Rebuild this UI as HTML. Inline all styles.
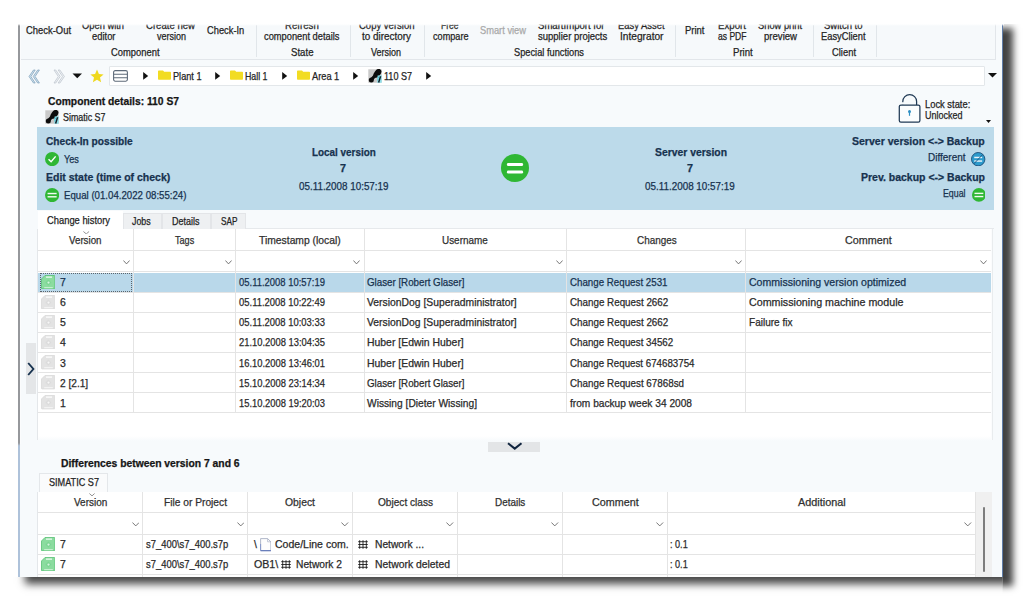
<!DOCTYPE html>
<html lang="en"><head><meta charset="utf-8"><title>Component details: 110 S7</title>
<style>
html,body{margin:0;padding:0;}
body{width:1024px;height:600px;overflow:hidden;background:#fff;position:relative;font-family:"Liberation Sans", sans-serif;}
.b{position:absolute;display:block;}
.t{position:absolute;white-space:pre;line-height:20px;height:20px;transform-origin:0 50%;-webkit-text-stroke:0.25px;}
</style></head><body>
<div class="b" style="left:18px;top:24px;width:984.6px;height:553px;box-shadow:7.5px 6.5px 7px 2.5px rgba(0,0,0,.74);clip-path:polygon(984.6px -20px,1030px -20px,1030px 600px,984.6px 600px);"></div>
<div class="b" style="left:18px;top:24px;width:984.6px;height:553px;box-shadow:9px 4px 8px 2.5px rgba(0,0,0,.72);clip-path:polygon(-20px 553px,984.6px 553px,984.6px 600px,-20px 600px);"></div>
<div class="b" style="left:18px;top:24px;width:984.6px;height:553px;background:#f7fafc;"></div>
<div class="b" style="left:18px;top:24px;width:2px;height:420px;background:#96989c;"></div>
<div class="b" style="left:20px;top:24px;width:1.3px;height:420px;background:#fbfcfd;"></div>
<div class="b" style="left:18px;top:443px;width:2px;height:3px;background:linear-gradient(#96989c,#b4c6dc);"></div>
<div class="b" style="left:18.2px;top:446px;width:1.4px;height:131px;background:#aec2da;"></div>
<div class="b" style="left:1001.8px;top:24px;width:0.8px;height:553px;background:#5f7da8;"></div>
<div class="b" style="left:20.5px;top:24px;width:975.0px;height:35.5px;background:#f6f9fb;border-bottom:1px solid #e2e6ea;border-right:1px solid #e2e6ea;box-sizing:border-box;"></div>
<div class="b" style="left:255.5px;top:25px;width:1.0px;height:32px;background:#e1e6ea;"></div>
<div class="b" style="left:349.75px;top:25px;width:1.0px;height:32px;background:#e1e6ea;"></div>
<div class="b" style="left:424px;top:25px;width:1px;height:32px;background:#e1e6ea;"></div>
<div class="b" style="left:674.5px;top:25px;width:1.0px;height:32px;background:#e1e6ea;"></div>
<div class="b" style="left:813px;top:25px;width:1px;height:32px;background:#e1e6ea;"></div>
<div class="b" style="left:875.5px;top:25px;width:1.0px;height:32px;background:#e1e6ea;"></div>
<div class="b" style="left:109px;top:65.5px;width:876px;height:20.5px;background:#fff;border:1px solid #e3e7ea;box-sizing:border-box;border-radius:1px;"></div>
<svg class="b" style="left:28px;top:69px" width="40" height="15" viewBox="0 0 40 15"><path d="M5.5 1 L7.2 1 L2.9 7.5 L7.2 14 L5.5 14 L1 7.5 Z M9.7 1 L11.4 1 L7.1 7.5 L11.4 14 L9.7 14 L5.2 7.5 Z" fill="#cfe4f1" stroke="#86a5bd" stroke-width="0.8" stroke-linejoin="round"/><path d="M26 1 L27.7 1 L32.2 7.5 L27.7 14 L26 14 L30.3 7.5 Z M30.2 1 L31.9 1 L36.4 7.5 L31.9 14 L30.2 14 L34.5 7.5 Z" fill="#f0f3f6" stroke="#bfc7cf" stroke-width="0.8" stroke-linejoin="round"/></svg>
<svg class="b" style="left:72px;top:72.5px" width="11" height="6" viewBox="0 0 11 6"><path d="M0.5 0.5 L10 0.5 L5.25 5.2 Z" fill="#111"/></svg>
<svg class="b" style="left:90px;top:68.9px" width="14" height="14" viewBox="0 0 14 14"><path d="M7 0.6 L8.9 5 L13.6 5.4 L10 8.5 L11.1 13.2 L7 10.7 L2.9 13.2 L4 8.5 L0.4 5.4 L5.1 5 Z" fill="#efd81d"/></svg>
<svg class="b" style="left:113px;top:70.1px" width="15" height="12" viewBox="0 0 15 12"><rect x="0.6" y="0.6" width="13.8" height="10.6" rx="1.6" fill="#fff" stroke="#5f6b7a" stroke-width="1.1"/><path d="M0.6 4.2 H14.4 M0.6 7.7 H14.4" stroke="#5f6b7a" stroke-width="1.1"/></svg>
<svg class="b" style="left:142.5px;top:71.8px" width="6" height="8" viewBox="0 0 6 8"><path d="M0.2 0.1 L5.2 3.95 L0.2 7.8 Z" fill="#111"/></svg>
<svg class="b" style="left:158px;top:70px" width="13" height="10" viewBox="0 0 13 10"><path d="M0 1.2 Q0 0.4 0.8 0.4 H5 L6.2 1.8 H12.2 Q13 1.8 13 2.6 V9 Q13 9.8 12.2 9.8 H0.8 Q0 9.8 0 9 Z" fill="#f2dc22"/></svg>
<svg class="b" style="left:215px;top:71.8px" width="6" height="8" viewBox="0 0 6 8"><path d="M0.2 0.1 L5.2 3.95 L0.2 7.8 Z" fill="#111"/></svg>
<svg class="b" style="left:230px;top:70px" width="13" height="10" viewBox="0 0 13 10"><path d="M0 1.2 Q0 0.4 0.8 0.4 H5 L6.2 1.8 H12.2 Q13 1.8 13 2.6 V9 Q13 9.8 12.2 9.8 H0.8 Q0 9.8 0 9 Z" fill="#f2dc22"/></svg>
<svg class="b" style="left:281.5px;top:71.8px" width="6" height="8" viewBox="0 0 6 8"><path d="M0.2 0.1 L5.2 3.95 L0.2 7.8 Z" fill="#111"/></svg>
<svg class="b" style="left:296.5px;top:70px" width="13" height="10" viewBox="0 0 13 10"><path d="M0 1.2 Q0 0.4 0.8 0.4 H5 L6.2 1.8 H12.2 Q13 1.8 13 2.6 V9 Q13 9.8 12.2 9.8 H0.8 Q0 9.8 0 9 Z" fill="#f2dc22"/></svg>
<svg class="b" style="left:353px;top:71.8px" width="6" height="8" viewBox="0 0 6 8"><path d="M0.2 0.1 L5.2 3.95 L0.2 7.8 Z" fill="#111"/></svg>
<svg class="b" style="left:367.75px;top:68.75px" width="14" height="14" viewBox="0 0 14 14"><rect x="0.3" y="0.3" width="13.4" height="13.4" fill="#c9c9c9"/><ellipse cx="9.4" cy="4.3" rx="4.9" ry="3.1" transform="rotate(-52 9.4 4.3)" fill="#0c0c0c"/><path d="M3.4 10.8 L8.6 4.8" stroke="#0c0c0c" stroke-width="3.2" stroke-linecap="round"/><circle cx="3.3" cy="10.9" r="2.5" fill="#0c0c0c"/><path d="M9.6 6.6 L13.7 6.2 L13.7 13.7 L9.2 13.7 Z" fill="#8fe0ea"/><path d="M12.6 7.2 L10.6 13.4" stroke="#13202a" stroke-width="1.5"/><path d="M10.4 7.8 L9.9 11.6" stroke="#27b4c9" stroke-width="1.1" stroke-dasharray="1 0.8"/></svg>
<svg class="b" style="left:426px;top:71.8px" width="6" height="8" viewBox="0 0 6 8"><path d="M0.2 0.1 L5.2 3.95 L0.2 7.8 Z" fill="#111"/></svg>
<svg class="b" style="left:988px;top:73px" width="9" height="5" viewBox="0 0 9 5"><path d="M0 0 H9 L4.5 4.6 Z" fill="#111"/></svg>
<svg class="b" style="left:45.2px;top:109.8px" width="14" height="14" viewBox="0 0 14 14"><rect x="0.3" y="0.3" width="13.4" height="13.4" fill="#c9c9c9"/><ellipse cx="9.4" cy="4.3" rx="4.9" ry="3.1" transform="rotate(-52 9.4 4.3)" fill="#0c0c0c"/><path d="M3.4 10.8 L8.6 4.8" stroke="#0c0c0c" stroke-width="3.2" stroke-linecap="round"/><circle cx="3.3" cy="10.9" r="2.5" fill="#0c0c0c"/><path d="M9.6 6.6 L13.7 6.2 L13.7 13.7 L9.2 13.7 Z" fill="#8fe0ea"/><path d="M12.6 7.2 L10.6 13.4" stroke="#13202a" stroke-width="1.5"/><path d="M10.4 7.8 L9.9 11.6" stroke="#27b4c9" stroke-width="1.1" stroke-dasharray="1 0.8"/></svg>
<svg class="b" style="left:897px;top:92px" width="25" height="32" viewBox="0 0 25 32"><path d="M5.8 13 V9.5 A6.9 6.9 0 0 1 19.6 9.5 V13" fill="none" stroke="#213a55" stroke-width="1.25"/><rect x="0" y="10.2" width="7" height="2.6" fill="#f7fafc"/><rect x="2.3" y="13" width="20.6" height="17" rx="1.6" fill="#fbfdfe" stroke="#213a55" stroke-width="1.25"/><circle cx="12.5" cy="19.4" r="1.5" fill="#2f8fc4"/><rect x="11.9" y="19.6" width="1.2" height="4.2" fill="#2f8fc4"/></svg>
<svg class="b" style="left:985.5px;top:119.5px" width="5" height="3" viewBox="0 0 5 3"><path d="M0 0 H5 L2.5 3 Z" fill="#111"/></svg>
<div class="b" style="left:37px;top:127px;width:957.25px;height:83px;background:#bcdaea;"></div>
<svg class="b" style="left:45.3px;top:152.0px" width="14.2" height="14.2" viewBox="0 0 14.2 14.2"><circle cx="7.1" cy="7.1" r="7.1" fill="#2fb734"/><path d="M3.55 7.24 L6.11 9.80 L10.65 4.40" fill="none" stroke="#fff" stroke-width="1.42"/></svg>
<svg class="b" style="left:45.3px;top:187.5px" width="14.2" height="14.2" viewBox="0 0 14.2 14.2"><circle cx="7.1" cy="7.1" r="7.1" fill="#2fb734"/><rect x="2.56" y="4.83" width="9.09" height="1.42" fill="#f2fbf2"/><rect x="2.56" y="8.09" width="9.09" height="1.42" fill="#f2fbf2"/></svg>
<svg class="b" style="left:501.4px;top:154.3px" width="28" height="28" viewBox="0 0 28 28"><circle cx="14" cy="14" r="14" fill="#2fb734"/><rect x="5.88" y="8.96" width="16.24" height="3.08" rx="1.40" fill="#fff"/><rect x="5.88" y="16.52" width="16.24" height="3.08" rx="1.40" fill="#fff"/></svg>
<svg class="b" style="left:971.4px;top:151.70000000000002px" width="14.4" height="14.4" viewBox="0 0 14.4 14.4"><circle cx="7.2" cy="7.2" r="6.7" fill="#2d9bcc" stroke="#1d4e78" stroke-width="0.9"/><rect x="3.24" y="4.75" width="7.92" height="1.44" fill="#e9f4fa"/><rect x="3.24" y="8.35" width="7.92" height="1.44" fill="#e9f4fa"/><path d="M11.66 2.59 L2.88 11.81" stroke="#1d4e78" stroke-width="0.9"/></svg>
<svg class="b" style="left:971.7px;top:188.0px" width="13.8" height="13.8" viewBox="0 0 13.8 13.8"><circle cx="6.9" cy="6.9" r="6.9" fill="#2fb734"/><rect x="2.48" y="4.69" width="8.83" height="1.38" fill="#f2fbf2"/><rect x="2.48" y="7.87" width="8.83" height="1.38" fill="#f2fbf2"/></svg>
<div class="b" style="left:37.5px;top:211.3px;width:85.0px;height:18.2px;background:#fff;"></div>
<div class="b" style="left:123px;top:213px;width:38.5px;height:15.5px;background:#eef0f2;border:1px solid #e3e5e8;border-bottom:none;box-sizing:border-box;"></div>
<div class="b" style="left:162px;top:213px;width:48.5px;height:15.5px;background:#eef0f2;border:1px solid #e3e5e8;border-bottom:none;box-sizing:border-box;"></div>
<div class="b" style="left:211px;top:213px;width:35px;height:15.5px;background:#eef0f2;border:1px solid #e3e5e8;border-bottom:none;box-sizing:border-box;"></div>
<div class="b" style="left:246px;top:228px;width:748px;height:1px;background:#e6e9ec;"></div>
<div class="b" style="left:37.5px;top:229px;width:953.0px;height:207px;background:#fff;"></div>
<div class="b" style="left:37.5px;top:436px;width:953.0px;height:5px;background:linear-gradient(#fff,#f7fafc);"></div>
<div class="b" style="left:990.5px;top:229px;width:2.0px;height:211px;background:#fbfcfd;"></div>
<div class="b" style="left:992px;top:228.5px;width:1px;height:211.5px;background:#e9ecee;"></div>
<div class="b" style="left:37.5px;top:272.5px;width:953.0px;height:19.5px;background:#b9d8ea;"></div>
<div class="b" style="left:37.5px;top:249.5px;width:953.0px;height:1.0px;background:#e4e4e4;"></div>
<div class="b" style="left:37.5px;top:271.4px;width:953.0px;height:1.0px;background:#e4e4e4;"></div>
<div class="b" style="left:37.5px;top:291.5px;width:953.0px;height:1.0px;background:#e4e4e4;"></div>
<div class="b" style="left:37.5px;top:311.5px;width:953.0px;height:1.0px;background:#e4e4e4;"></div>
<div class="b" style="left:37.5px;top:331.9px;width:953.0px;height:1.0px;background:#e4e4e4;"></div>
<div class="b" style="left:37.5px;top:352.0px;width:953.0px;height:1.0px;background:#e4e4e4;"></div>
<div class="b" style="left:37.5px;top:372.0px;width:953.0px;height:1.0px;background:#e4e4e4;"></div>
<div class="b" style="left:37.5px;top:392.0px;width:953.0px;height:1.0px;background:#e4e4e4;"></div>
<div class="b" style="left:37.5px;top:412.2px;width:953.0px;height:1.0px;background:#e4e4e4;"></div>
<div class="b" style="left:132.75px;top:229px;width:1.0px;height:183.7px;background:#e4e4e4;"></div>
<div class="b" style="left:234.5px;top:229px;width:1.0px;height:183.7px;background:#e4e4e4;"></div>
<div class="b" style="left:363.5px;top:229px;width:1.0px;height:183.7px;background:#e4e4e4;"></div>
<div class="b" style="left:565.75px;top:229px;width:1.0px;height:183.7px;background:#e4e4e4;"></div>
<div class="b" style="left:745.25px;top:229px;width:1.0px;height:183.7px;background:#e4e4e4;"></div>
<div class="b" style="left:37.0px;top:229px;width:1.0px;height:211px;background:#e4e7ea;"></div>
<div class="b" style="left:40px;top:272.5px;width:91.8px;height:19.0px;border:1px dotted #5d646b;box-sizing:border-box;"></div>
<svg class="b" style="left:83px;top:230.6px" width="6.5" height="3.5" viewBox="0 0 6.5 3.5"><path d="M0.4 0.5 L3.25 2.9 L6.1 0.5" fill="none" stroke="#777" stroke-width="0.8"/></svg>
<svg class="b" style="left:122.5px;top:260px" width="7" height="4.5" viewBox="0 0 7 4.5"><path d="M0.4 0.5 L3.5 3.9 L6.6 0.5" fill="none" stroke="#666" stroke-width="0.9"/></svg>
<svg class="b" style="left:224.5px;top:260px" width="7" height="4.5" viewBox="0 0 7 4.5"><path d="M0.4 0.5 L3.5 3.9 L6.6 0.5" fill="none" stroke="#666" stroke-width="0.9"/></svg>
<svg class="b" style="left:353px;top:260px" width="7" height="4.5" viewBox="0 0 7 4.5"><path d="M0.4 0.5 L3.5 3.9 L6.6 0.5" fill="none" stroke="#666" stroke-width="0.9"/></svg>
<svg class="b" style="left:555.75px;top:260px" width="7" height="4.5" viewBox="0 0 7 4.5"><path d="M0.4 0.5 L3.5 3.9 L6.6 0.5" fill="none" stroke="#666" stroke-width="0.9"/></svg>
<svg class="b" style="left:734.5px;top:260px" width="7" height="4.5" viewBox="0 0 7 4.5"><path d="M0.4 0.5 L3.5 3.9 L6.6 0.5" fill="none" stroke="#666" stroke-width="0.9"/></svg>
<svg class="b" style="left:979.5px;top:260px" width="7" height="4.5" viewBox="0 0 7 4.5"><path d="M0.4 0.5 L3.5 3.9 L6.6 0.5" fill="none" stroke="#666" stroke-width="0.9"/></svg>
<svg class="b" style="left:40.8px;top:274.8px" width="14.4" height="14.4" viewBox="0 0 14.4 14.4"><path d="M0.5 4 L4 0.5 H13.3 Q13.9 0.5 13.9 1.1 V13.3 Q13.9 13.9 13.3 13.9 H1.1 Q0.5 13.9 0.5 13.3 Z" fill="#8bdc9f" stroke="#56bf72" stroke-width="0.8"/><rect x="5" y="1.3" width="6" height="1.7" fill="#d4f3dc"/><path d="M7.4 4.6 L10.4 7.6 L7.4 10.6 L4.4 7.6 Z" fill="#6fcf88" opacity="0.55"/><circle cx="7.5" cy="7.6" r="1.1" fill="#d4f3dc"/><rect x="3.2" y="12.2" width="8.6" height="1" fill="#d4f3dc"/></svg>
<svg class="b" style="left:40.8px;top:294.88px" width="14.4" height="14.4" viewBox="0 0 14.4 14.4"><path d="M0.5 4 L4 0.5 H13.3 Q13.9 0.5 13.9 1.1 V13.3 Q13.9 13.9 13.3 13.9 H1.1 Q0.5 13.9 0.5 13.3 Z" fill="#e3e3e3" stroke="#d9d9d9" stroke-width="0.8"/><rect x="5" y="1.3" width="6" height="1.7" fill="#f6f6f6"/><path d="M7.4 4.6 L10.4 7.6 L7.4 10.6 L4.4 7.6 Z" fill="#d6d6d6" opacity="0.55"/><circle cx="7.5" cy="7.6" r="1.1" fill="#f6f6f6"/><rect x="3.2" y="12.2" width="8.6" height="1" fill="#f6f6f6"/></svg>
<svg class="b" style="left:40.8px;top:314.96000000000004px" width="14.4" height="14.4" viewBox="0 0 14.4 14.4"><path d="M0.5 4 L4 0.5 H13.3 Q13.9 0.5 13.9 1.1 V13.3 Q13.9 13.9 13.3 13.9 H1.1 Q0.5 13.9 0.5 13.3 Z" fill="#e3e3e3" stroke="#d9d9d9" stroke-width="0.8"/><rect x="5" y="1.3" width="6" height="1.7" fill="#f6f6f6"/><path d="M7.4 4.6 L10.4 7.6 L7.4 10.6 L4.4 7.6 Z" fill="#d6d6d6" opacity="0.55"/><circle cx="7.5" cy="7.6" r="1.1" fill="#f6f6f6"/><rect x="3.2" y="12.2" width="8.6" height="1" fill="#f6f6f6"/></svg>
<svg class="b" style="left:40.8px;top:335.04px" width="14.4" height="14.4" viewBox="0 0 14.4 14.4"><path d="M0.5 4 L4 0.5 H13.3 Q13.9 0.5 13.9 1.1 V13.3 Q13.9 13.9 13.3 13.9 H1.1 Q0.5 13.9 0.5 13.3 Z" fill="#e3e3e3" stroke="#d9d9d9" stroke-width="0.8"/><rect x="5" y="1.3" width="6" height="1.7" fill="#f6f6f6"/><path d="M7.4 4.6 L10.4 7.6 L7.4 10.6 L4.4 7.6 Z" fill="#d6d6d6" opacity="0.55"/><circle cx="7.5" cy="7.6" r="1.1" fill="#f6f6f6"/><rect x="3.2" y="12.2" width="8.6" height="1" fill="#f6f6f6"/></svg>
<svg class="b" style="left:40.8px;top:355.12px" width="14.4" height="14.4" viewBox="0 0 14.4 14.4"><path d="M0.5 4 L4 0.5 H13.3 Q13.9 0.5 13.9 1.1 V13.3 Q13.9 13.9 13.3 13.9 H1.1 Q0.5 13.9 0.5 13.3 Z" fill="#e3e3e3" stroke="#d9d9d9" stroke-width="0.8"/><rect x="5" y="1.3" width="6" height="1.7" fill="#f6f6f6"/><path d="M7.4 4.6 L10.4 7.6 L7.4 10.6 L4.4 7.6 Z" fill="#d6d6d6" opacity="0.55"/><circle cx="7.5" cy="7.6" r="1.1" fill="#f6f6f6"/><rect x="3.2" y="12.2" width="8.6" height="1" fill="#f6f6f6"/></svg>
<svg class="b" style="left:40.8px;top:375.2px" width="14.4" height="14.4" viewBox="0 0 14.4 14.4"><path d="M0.5 4 L4 0.5 H13.3 Q13.9 0.5 13.9 1.1 V13.3 Q13.9 13.9 13.3 13.9 H1.1 Q0.5 13.9 0.5 13.3 Z" fill="#e3e3e3" stroke="#d9d9d9" stroke-width="0.8"/><rect x="5" y="1.3" width="6" height="1.7" fill="#f6f6f6"/><path d="M7.4 4.6 L10.4 7.6 L7.4 10.6 L4.4 7.6 Z" fill="#d6d6d6" opacity="0.55"/><circle cx="7.5" cy="7.6" r="1.1" fill="#f6f6f6"/><rect x="3.2" y="12.2" width="8.6" height="1" fill="#f6f6f6"/></svg>
<svg class="b" style="left:40.8px;top:395.28px" width="14.4" height="14.4" viewBox="0 0 14.4 14.4"><path d="M0.5 4 L4 0.5 H13.3 Q13.9 0.5 13.9 1.1 V13.3 Q13.9 13.9 13.3 13.9 H1.1 Q0.5 13.9 0.5 13.3 Z" fill="#e3e3e3" stroke="#d9d9d9" stroke-width="0.8"/><rect x="5" y="1.3" width="6" height="1.7" fill="#f6f6f6"/><path d="M7.4 4.6 L10.4 7.6 L7.4 10.6 L4.4 7.6 Z" fill="#d6d6d6" opacity="0.55"/><circle cx="7.5" cy="7.6" r="1.1" fill="#f6f6f6"/><rect x="3.2" y="12.2" width="8.6" height="1" fill="#f6f6f6"/></svg>
<div class="b" style="left:25.75px;top:342.5px;width:10.0px;height:51.25px;background:#e4e6e8;"></div>
<svg class="b" style="left:26.5px;top:362px" width="8" height="14" viewBox="0 0 8 14"><path d="M1.2 1 L6.4 7 L1.2 13" fill="none" stroke="#17324f" stroke-width="1.9"/></svg>
<div class="b" style="left:488.3px;top:441.7px;width:52.0px;height:10.0px;background:#e3e5e7;"></div>
<svg class="b" style="left:507px;top:441.8px" width="15.5" height="8.5" viewBox="0 0 15.5 8.5"><path d="M1 1.2 L7.75 6.6 L14.5 1.2" fill="none" stroke="#10253f" stroke-width="2"/></svg>
<div class="b" style="left:39.3px;top:473.3px;width:69.0px;height:18.4px;background:#fafbfc;border:1px solid #e4e7ea;border-bottom:none;box-sizing:border-box;"></div>
<div class="b" style="left:37.5px;top:491.7px;width:937.8px;height:85.3px;background:#fff;"></div>
<div class="b" style="left:37.5px;top:511.79999999999995px;width:937.8px;height:1.0px;background:#e4e4e4;"></div>
<div class="b" style="left:37.5px;top:533.5px;width:937.8px;height:1.0px;background:#e4e4e4;"></div>
<div class="b" style="left:37.5px;top:553.8px;width:937.8px;height:1.0px;background:#e4e4e4;"></div>
<div class="b" style="left:37.5px;top:573.8px;width:937.8px;height:1.0px;background:#e4e4e4;"></div>
<div class="b" style="left:142.2px;top:491.7px;width:1.0px;height:85.3px;background:#e4e4e4;"></div>
<div class="b" style="left:246.8px;top:491.7px;width:1.0px;height:85.3px;background:#e4e4e4;"></div>
<div class="b" style="left:352.2px;top:491.7px;width:1.0px;height:85.3px;background:#e4e4e4;"></div>
<div class="b" style="left:457.2px;top:491.7px;width:1.0px;height:85.3px;background:#e4e4e4;"></div>
<div class="b" style="left:562.2px;top:491.7px;width:1.0px;height:85.3px;background:#e4e4e4;"></div>
<div class="b" style="left:666.5px;top:491.7px;width:1.0px;height:85.3px;background:#e4e4e4;"></div>
<div class="b" style="left:37.0px;top:491.7px;width:1.0px;height:85.3px;background:#e4e7ea;"></div>
<div class="b" style="left:974.8px;top:491.7px;width:1.0px;height:85.3px;background:#e4e4e4;"></div>
<svg class="b" style="left:88.5px;top:492.5px" width="6" height="3.5" viewBox="0 0 6 3.5"><path d="M0.4 0.5 L3.0 2.9 L5.6 0.5" fill="none" stroke="#777" stroke-width="0.8"/></svg>
<svg class="b" style="left:131.7px;top:521.7px" width="7.5" height="4.5" viewBox="0 0 7.5 4.5"><path d="M0.4 0.5 L3.75 3.9 L7.1 0.5" fill="none" stroke="#666" stroke-width="0.9"/></svg>
<svg class="b" style="left:236.7px;top:521.7px" width="7.5" height="4.5" viewBox="0 0 7.5 4.5"><path d="M0.4 0.5 L3.75 3.9 L7.1 0.5" fill="none" stroke="#666" stroke-width="0.9"/></svg>
<svg class="b" style="left:341.3px;top:521.7px" width="7.5" height="4.5" viewBox="0 0 7.5 4.5"><path d="M0.4 0.5 L3.75 3.9 L7.1 0.5" fill="none" stroke="#666" stroke-width="0.9"/></svg>
<svg class="b" style="left:446.3px;top:521.7px" width="7.5" height="4.5" viewBox="0 0 7.5 4.5"><path d="M0.4 0.5 L3.75 3.9 L7.1 0.5" fill="none" stroke="#666" stroke-width="0.9"/></svg>
<svg class="b" style="left:551.3px;top:521.7px" width="7.5" height="4.5" viewBox="0 0 7.5 4.5"><path d="M0.4 0.5 L3.75 3.9 L7.1 0.5" fill="none" stroke="#666" stroke-width="0.9"/></svg>
<svg class="b" style="left:656px;top:521.7px" width="7.5" height="4.5" viewBox="0 0 7.5 4.5"><path d="M0.4 0.5 L3.75 3.9 L7.1 0.5" fill="none" stroke="#666" stroke-width="0.9"/></svg>
<svg class="b" style="left:964px;top:521.7px" width="7.5" height="4.5" viewBox="0 0 7.5 4.5"><path d="M0.4 0.5 L3.75 3.9 L7.1 0.5" fill="none" stroke="#666" stroke-width="0.9"/></svg>
<div class="b" style="left:976.3px;top:491.7px;width:15.7px;height:85.3px;background:#f0f0f0;"></div>
<div class="b" style="left:983.2px;top:506.7px;width:2.0px;height:65.7px;background:#7d7d7d;border-radius:1px;"></div>
<svg class="b" style="left:40.8px;top:536.8px" width="14.4" height="14.4" viewBox="0 0 14.4 14.4"><path d="M0.5 4 L4 0.5 H13.3 Q13.9 0.5 13.9 1.1 V13.3 Q13.9 13.9 13.3 13.9 H1.1 Q0.5 13.9 0.5 13.3 Z" fill="#8bdc9f" stroke="#56bf72" stroke-width="0.8"/><rect x="5" y="1.3" width="6" height="1.7" fill="#d4f3dc"/><path d="M7.4 4.6 L10.4 7.6 L7.4 10.6 L4.4 7.6 Z" fill="#6fcf88" opacity="0.55"/><circle cx="7.5" cy="7.6" r="1.1" fill="#d4f3dc"/><rect x="3.2" y="12.2" width="8.6" height="1" fill="#d4f3dc"/></svg>
<svg class="b" style="left:40.8px;top:556.8px" width="14.4" height="14.4" viewBox="0 0 14.4 14.4"><path d="M0.5 4 L4 0.5 H13.3 Q13.9 0.5 13.9 1.1 V13.3 Q13.9 13.9 13.3 13.9 H1.1 Q0.5 13.9 0.5 13.3 Z" fill="#8bdc9f" stroke="#56bf72" stroke-width="0.8"/><rect x="5" y="1.3" width="6" height="1.7" fill="#d4f3dc"/><path d="M7.4 4.6 L10.4 7.6 L7.4 10.6 L4.4 7.6 Z" fill="#6fcf88" opacity="0.55"/><circle cx="7.5" cy="7.6" r="1.1" fill="#d4f3dc"/><rect x="3.2" y="12.2" width="8.6" height="1" fill="#d4f3dc"/></svg>
<svg class="b" style="left:259.5px;top:538px" width="11.5" height="13.5" viewBox="0 0 11.5 13.5"><path d="M0.6 0.6 H7.6 L10.9 3.8 V12.6 H0.6 Z" fill="#fdfdfd" stroke="#a9b0c4" stroke-width="0.9"/><path d="M7.6 0.6 V3.8 H10.9" fill="none" stroke="#a9b0c4" stroke-width="0.7"/><path d="M0.6 12.7 H10.9" stroke="#5d74b8" stroke-width="1.1"/><path d="M0.6 6 V12.6" stroke="#7f93cc" stroke-width="0.9"/></svg>
<svg class="b" style="left:357.6px;top:540.4px" width="10" height="9" viewBox="0 0 10 9"><path d="M1.7 0.2 V8.8 M5 0.2 V8.8 M8.3 0.2 V8.8 M0.2 1.7 H9.8 M0.2 4.5 H9.8 M0.2 7.3 H9.8" stroke="#161616" stroke-width="0.86"/></svg>
<svg class="b" style="left:281px;top:560.4px" width="10" height="9" viewBox="0 0 10 9"><path d="M1.7 0.2 V8.8 M5 0.2 V8.8 M8.3 0.2 V8.8 M0.2 1.7 H9.8 M0.2 4.5 H9.8 M0.2 7.3 H9.8" stroke="#161616" stroke-width="0.86"/></svg>
<svg class="b" style="left:357.6px;top:560.4px" width="10" height="9" viewBox="0 0 10 9"><path d="M1.7 0.2 V8.8 M5 0.2 V8.8 M8.3 0.2 V8.8 M0.2 1.7 H9.8 M0.2 4.5 H9.8 M0.2 7.3 H9.8" stroke="#161616" stroke-width="0.86"/></svg>
<span class="t" style="left:25.75px;top:21.00px;font-size:10.3px;color:#242424;transform:scaleX(0.9143);">Check-Out</span>
<span class="t" style="left:82.00px;top:16.00px;font-size:10.3px;color:#242424;transform:scaleX(0.9057);">Open with</span>
<span class="t" style="left:91.50px;top:27.00px;font-size:10.3px;color:#242424;transform:scaleX(0.9121);">editor</span>
<span class="t" style="left:146.00px;top:16.00px;font-size:10.3px;color:#242424;transform:scaleX(0.9306);">Create new</span>
<span class="t" style="left:157.00px;top:27.00px;font-size:10.3px;color:#242424;transform:scaleX(0.8734);">version</span>
<span class="t" style="left:206.50px;top:21.00px;font-size:10.3px;color:#242424;transform:scaleX(0.9041);">Check-In</span>
<span class="t" style="left:111.00px;top:43.00px;font-size:10.3px;color:#242424;transform:scaleX(0.9111);">Component</span>
<span class="t" style="left:284.75px;top:16.00px;font-size:10.3px;color:#242424;transform:scaleX(0.9359);">Refresh</span>
<span class="t" style="left:263.50px;top:27.00px;font-size:10.3px;color:#242424;transform:scaleX(0.9033);">component details</span>
<span class="t" style="left:290.50px;top:43.00px;font-size:10.3px;color:#242424;transform:scaleX(0.9357);">State</span>
<span class="t" style="left:358.50px;top:16.00px;font-size:10.3px;color:#242424;transform:scaleX(0.9236);">Copy version</span>
<span class="t" style="left:362.00px;top:27.00px;font-size:10.3px;color:#242424;transform:scaleX(0.9620);">to directory</span>
<span class="t" style="left:371.00px;top:43.00px;font-size:10.3px;color:#242424;transform:scaleX(0.8731);">Version</span>
<span class="t" style="left:441.00px;top:16.00px;font-size:10.3px;color:#242424;transform:scaleX(0.8260);">Free</span>
<span class="t" style="left:433.00px;top:27.00px;font-size:10.3px;color:#242424;transform:scaleX(0.8861);">compare</span>
<span class="t" style="left:538.00px;top:16.00px;font-size:10.3px;color:#242424;transform:scaleX(0.9297);">SmartImport for</span>
<span class="t" style="left:537.75px;top:27.00px;font-size:10.3px;color:#242424;transform:scaleX(0.9235);">supplier projects</span>
<span class="t" style="left:618.00px;top:16.00px;font-size:10.3px;color:#242424;transform:scaleX(0.9129);">Easy Asset</span>
<span class="t" style="left:619.50px;top:27.00px;font-size:10.3px;color:#242424;transform:scaleX(0.9869);">Integrator</span>
<span class="t" style="left:514.00px;top:43.00px;font-size:10.3px;color:#242424;transform:scaleX(0.8991);">Special functions</span>
<span class="t" style="left:685.00px;top:21.00px;font-size:10.3px;color:#242424;transform:scaleX(0.9204);">Print</span>
<span class="t" style="left:718.00px;top:16.00px;font-size:10.3px;color:#242424;transform:scaleX(0.9407);">Export</span>
<span class="t" style="left:717.50px;top:27.00px;font-size:10.3px;color:#242424;transform:scaleX(0.8298);">as PDF</span>
<span class="t" style="left:733.00px;top:43.00px;font-size:10.3px;color:#242424;transform:scaleX(0.9322);">Print</span>
<span class="t" style="left:758.00px;top:16.00px;font-size:10.3px;color:#242424;transform:scaleX(0.9043);">Show print</span>
<span class="t" style="left:764.00px;top:27.00px;font-size:10.3px;color:#242424;transform:scaleX(0.9300);">preview</span>
<span class="t" style="left:824.00px;top:16.00px;font-size:10.3px;color:#242424;transform:scaleX(0.9215);">Switch to</span>
<span class="t" style="left:821.00px;top:27.00px;font-size:10.3px;color:#242424;transform:scaleX(0.9041);">EasyClient</span>
<span class="t" style="left:832.00px;top:43.00px;font-size:10.3px;color:#242424;transform:scaleX(0.9116);">Client</span>
<span class="t" style="left:480.00px;top:21.00px;font-size:10.3px;color:#a9a9a9;transform:scaleX(0.9033);">Smart view</span>
<span class="t" style="left:172.50px;top:67.00px;font-size:10.3px;color:#242424;transform:scaleX(0.8889);">Plant 1</span>
<span class="t" style="left:244.50px;top:67.00px;font-size:10.3px;color:#242424;transform:scaleX(0.8546);">Hall 1</span>
<span class="t" style="left:311.75px;top:67.00px;font-size:10.3px;color:#242424;transform:scaleX(0.8980);">Area 1</span>
<span class="t" style="left:384.00px;top:67.00px;font-size:10.3px;color:#242424;transform:scaleX(0.8784);">110 S7</span>
<span class="t" style="left:48.00px;top:92.00px;font-size:10.2px;font-weight:700;color:#151515;transform:scaleX(1.0104);">Component details: 110 S7</span>
<span class="t" style="left:63.00px;top:108.00px;font-size:10.3px;color:#242424;transform:scaleX(0.8635);">Simatic S7</span>
<span class="t" style="left:924.75px;top:95.00px;font-size:10.3px;color:#242424;transform:scaleX(0.9087);">Lock state:</span>
<span class="t" style="left:924.75px;top:106.00px;font-size:10.3px;color:#242424;transform:scaleX(0.8734);">Unlocked</span>
<span class="t" style="left:45.75px;top:132.00px;font-size:10.2px;font-weight:700;color:#17324f;transform:scaleX(0.9950);">Check-In possible</span>
<span class="t" style="left:63.80px;top:150.00px;font-size:10.3px;color:#17324f;transform:scaleX(0.8892);">Yes</span>
<span class="t" style="left:45.75px;top:168.00px;font-size:10.2px;font-weight:700;color:#17324f;transform:scaleX(1.0303);">Edit state (time of check)</span>
<span class="t" style="left:63.80px;top:186.00px;font-size:10.3px;color:#17324f;transform:scaleX(0.9381);">Equal (01.04.2022 08:55:24)</span>
<span class="t" style="left:312.25px;top:143.00px;font-size:10.2px;font-weight:700;color:#17324f;transform:scaleX(0.9705);">Local version</span>
<span class="t" style="left:340.40px;top:159.00px;font-size:10.2px;font-weight:700;color:#17324f;transform:scaleX(1.0579);">7</span>
<span class="t" style="left:298.50px;top:177.00px;font-size:10.3px;color:#17324f;transform:scaleX(0.9550);">05.11.2008 10:57:19</span>
<span class="t" style="left:654.50px;top:143.00px;font-size:10.2px;font-weight:700;color:#17324f;transform:scaleX(1.0170);">Server version</span>
<span class="t" style="left:687.20px;top:159.00px;font-size:10.2px;font-weight:700;color:#17324f;transform:scaleX(1.0579);">7</span>
<span class="t" style="left:645.25px;top:177.00px;font-size:10.3px;color:#17324f;transform:scaleX(0.9577);">05.11.2008 10:57:19</span>
<span class="t" style="left:852.25px;top:132.00px;font-size:10.2px;font-weight:700;color:#17324f;transform:scaleX(1.0327);">Server version &lt;-&gt; Backup</span>
<span class="t" style="left:928.00px;top:148.00px;font-size:10.3px;color:#17324f;transform:scaleX(0.9681);">Different</span>
<span class="t" style="left:861.00px;top:168.00px;font-size:10.2px;font-weight:700;color:#17324f;transform:scaleX(1.0297);">Prev. backup &lt;-&gt; Backup</span>
<span class="t" style="left:943.00px;top:184.00px;font-size:10.3px;color:#17324f;transform:scaleX(0.8541);">Equal</span>
<span class="t" style="left:47.00px;top:211.00px;font-size:10.3px;color:#242424;transform:scaleX(0.9095);">Change history</span>
<span class="t" style="left:131.75px;top:212.00px;font-size:10.3px;color:#242424;transform:scaleX(0.8615);">Jobs</span>
<span class="t" style="left:171.75px;top:212.00px;font-size:10.3px;color:#242424;transform:scaleX(0.8734);">Details</span>
<span class="t" style="left:220.50px;top:212.00px;font-size:10.3px;color:#242424;transform:scaleX(0.8006);">SAP</span>
<span class="t" style="left:69.25px;top:230.00px;font-size:10.5px;color:#303030;transform:scaleX(0.9277);">Version</span>
<span class="t" style="left:175.00px;top:230.00px;font-size:10.5px;color:#303030;transform:scaleX(0.8676);">Tags</span>
<span class="t" style="left:259.25px;top:230.00px;font-size:10.5px;color:#303030;transform:scaleX(0.9844);">Timestamp (local)</span>
<span class="t" style="left:442.25px;top:230.00px;font-size:10.5px;color:#303030;transform:scaleX(0.9445);">Username</span>
<span class="t" style="left:636.50px;top:230.00px;font-size:10.5px;color:#303030;transform:scaleX(0.9457);">Changes</span>
<span class="t" style="left:845.00px;top:230.00px;font-size:10.5px;color:#303030;transform:scaleX(1.0271);">Comment</span>
<span class="t" style="left:60.20px;top:272.00px;font-size:10.5px;color:#17324f;transform:scaleX(0.9994);">7</span>
<span class="t" style="left:238.75px;top:272.00px;font-size:10.5px;color:#17324f;transform:scaleX(0.8999);">05.11.2008 10:57:19</span>
<span class="t" style="left:367.25px;top:272.00px;font-size:10.5px;color:#17324f;transform:scaleX(0.9282);">Glaser [Robert Glaser]</span>
<span class="t" style="left:570.00px;top:272.00px;font-size:10.5px;color:#17324f;transform:scaleX(0.9277);">Change Request 2531</span>
<span class="t" style="left:749.00px;top:272.00px;font-size:10.5px;color:#17324f;transform:scaleX(1.0054);">Commissioning version optimized</span>
<span class="t" style="left:60.20px;top:292.00px;font-size:10.5px;color:#2a2a2a;transform:scaleX(0.9994);">6</span>
<span class="t" style="left:238.75px;top:292.00px;font-size:10.5px;color:#2a2a2a;transform:scaleX(0.8999);">05.11.2008 10:22:49</span>
<span class="t" style="left:367.25px;top:292.00px;font-size:10.5px;color:#2a2a2a;transform:scaleX(0.9868);">VersionDog [Superadministrator]</span>
<span class="t" style="left:570.00px;top:292.00px;font-size:10.5px;color:#2a2a2a;transform:scaleX(0.9349);">Change Request 2662</span>
<span class="t" style="left:749.00px;top:292.00px;font-size:10.5px;color:#2a2a2a;transform:scaleX(1.0182);">Commissioning machine module</span>
<span class="t" style="left:60.20px;top:312.00px;font-size:10.5px;color:#2a2a2a;transform:scaleX(0.9994);">5</span>
<span class="t" style="left:238.75px;top:312.00px;font-size:10.5px;color:#2a2a2a;transform:scaleX(0.8999);">05.11.2008 10:03:33</span>
<span class="t" style="left:367.25px;top:312.00px;font-size:10.5px;color:#2a2a2a;transform:scaleX(0.9868);">VersionDog [Superadministrator]</span>
<span class="t" style="left:570.00px;top:312.00px;font-size:10.5px;color:#2a2a2a;transform:scaleX(0.9349);">Change Request 2662</span>
<span class="t" style="left:749.00px;top:312.00px;font-size:10.5px;color:#2a2a2a;transform:scaleX(0.9557);">Failure fix</span>
<span class="t" style="left:60.20px;top:332.00px;font-size:10.5px;color:#2a2a2a;transform:scaleX(0.9994);">4</span>
<span class="t" style="left:238.75px;top:332.00px;font-size:10.5px;color:#2a2a2a;transform:scaleX(0.8926);">21.10.2008 13:04:35</span>
<span class="t" style="left:367.25px;top:332.00px;font-size:10.5px;color:#2a2a2a;transform:scaleX(0.9926);">Huber [Edwin Huber]</span>
<span class="t" style="left:570.00px;top:332.00px;font-size:10.5px;color:#2a2a2a;transform:scaleX(0.9308);">Change Request 34562</span>
<span class="t" style="left:60.20px;top:353.00px;font-size:10.5px;color:#2a2a2a;transform:scaleX(0.9994);">3</span>
<span class="t" style="left:238.75px;top:353.00px;font-size:10.5px;color:#2a2a2a;transform:scaleX(0.8926);">16.10.2008 13:46:01</span>
<span class="t" style="left:367.25px;top:353.00px;font-size:10.5px;color:#2a2a2a;transform:scaleX(0.9926);">Huber [Edwin Huber]</span>
<span class="t" style="left:570.00px;top:353.00px;font-size:10.5px;color:#2a2a2a;transform:scaleX(0.9272);">Change Request 674683754</span>
<span class="t" style="left:60.20px;top:373.00px;font-size:10.5px;color:#2a2a2a;transform:scaleX(0.9657);">2 [2.1]</span>
<span class="t" style="left:238.75px;top:373.00px;font-size:10.5px;color:#2a2a2a;transform:scaleX(0.8926);">15.10.2008 23:14:34</span>
<span class="t" style="left:367.25px;top:373.00px;font-size:10.5px;color:#2a2a2a;transform:scaleX(0.9282);">Glaser [Robert Glaser]</span>
<span class="t" style="left:570.00px;top:373.00px;font-size:10.5px;color:#2a2a2a;transform:scaleX(0.9343);">Change Request 67868sd</span>
<span class="t" style="left:60.20px;top:393.00px;font-size:10.5px;color:#2a2a2a;transform:scaleX(0.9994);">1</span>
<span class="t" style="left:238.75px;top:393.00px;font-size:10.5px;color:#2a2a2a;transform:scaleX(0.8926);">15.10.2008 19:20:03</span>
<span class="t" style="left:367.25px;top:393.00px;font-size:10.5px;color:#2a2a2a;transform:scaleX(0.9717);">Wissing [Dieter Wissing]</span>
<span class="t" style="left:570.00px;top:393.00px;font-size:10.5px;color:#2a2a2a;transform:scaleX(0.9677);">from backup week 34 2008</span>
<span class="t" style="left:60.70px;top:454.00px;font-size:10.2px;font-weight:700;color:#151515;transform:scaleX(1.0142);">Differences between version 7 and 6</span>
<span class="t" style="left:49.00px;top:473.00px;font-size:10.3px;color:#242424;transform:scaleX(0.8857);">SIMATIC S7</span>
<span class="t" style="left:74.00px;top:492.00px;font-size:10.5px;color:#303030;transform:scaleX(0.9506);">Version</span>
<span class="t" style="left:164.30px;top:492.00px;font-size:10.5px;color:#303030;transform:scaleX(0.9725);">File or Project</span>
<span class="t" style="left:285.30px;top:492.00px;font-size:10.5px;color:#303030;transform:scaleX(0.9882);">Object</span>
<span class="t" style="left:377.70px;top:492.00px;font-size:10.5px;color:#303030;transform:scaleX(0.9617);">Object class</span>
<span class="t" style="left:495.00px;top:492.00px;font-size:10.5px;color:#303030;transform:scaleX(0.9436);">Details</span>
<span class="t" style="left:592.00px;top:492.00px;font-size:10.5px;color:#303030;transform:scaleX(1.0260);">Comment</span>
<span class="t" style="left:798.00px;top:492.00px;font-size:10.5px;color:#303030;transform:scaleX(1.0341);">Additional</span>
<span class="t" style="left:60.40px;top:534.00px;font-size:10.5px;color:#2a2a2a;transform:scaleX(0.9994);">7</span>
<span class="t" style="left:146.00px;top:534.00px;font-size:10.5px;color:#2a2a2a;transform:scaleX(0.8978);">s7_400\s7_400.s7p</span>
<span class="t" style="left:670.30px;top:534.00px;font-size:10.5px;color:#2a2a2a;transform:scaleX(0.8661);">: 0.1</span>
<span class="t" style="left:60.40px;top:554.00px;font-size:10.5px;color:#2a2a2a;transform:scaleX(0.9994);">7</span>
<span class="t" style="left:146.00px;top:554.00px;font-size:10.5px;color:#2a2a2a;transform:scaleX(0.8978);">s7_400\s7_400.s7p</span>
<span class="t" style="left:670.30px;top:554.00px;font-size:10.5px;color:#2a2a2a;transform:scaleX(0.8661);">: 0.1</span>
<span class="t" style="left:254.00px;top:534.00px;font-size:10.5px;color:#2a2a2a;transform:scaleX(0.9925);">\</span>
<span class="t" style="left:275.00px;top:534.00px;font-size:10.5px;color:#2a2a2a;transform:scaleX(1.0021);">Code/Line com.</span>
<span class="t" style="left:375.30px;top:534.00px;font-size:10.5px;color:#2a2a2a;transform:scaleX(0.9763);">Network ...</span>
<span class="t" style="left:253.50px;top:554.00px;font-size:10.5px;color:#2a2a2a;transform:scaleX(1.0110);">OB1\</span>
<span class="t" style="left:296.00px;top:554.00px;font-size:10.5px;color:#2a2a2a;transform:scaleX(0.9732);">Network 2</span>
<span class="t" style="left:375.30px;top:554.00px;font-size:10.5px;color:#2a2a2a;transform:scaleX(0.9885);">Network deleted</span>
<div class="b" style="left:0;top:0;width:1024px;height:23.5px;background:#fff"></div>
<div class="b" style="left:18px;top:23.5px;width:986px;height:2px;background:linear-gradient(#fff,rgba(255,255,255,0))"></div>
</body></html>
